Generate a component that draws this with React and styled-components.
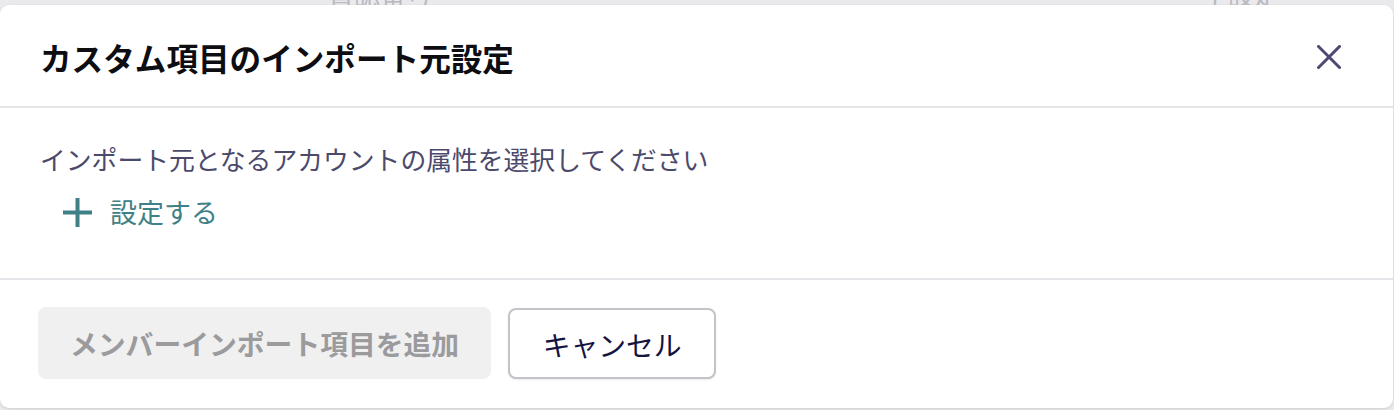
import React from "react";
import styled, { createGlobalStyle } from "styled-components";

const GlobalStyle = createGlobalStyle`
  html, body {
    margin: 0;
    padding: 0;
    background: #eaeaed;
    font-family: "Noto Sans CJK JP", "Noto Sans", sans-serif;
  }
  * { box-sizing: border-box; }
`;

const Page = styled.div`
  width: 1394px;
  height: 410px;
  overflow: hidden;
  display: flex;
  flex-direction: column;
`;

const BackdropStrip = styled.div`
  height: 5px;
  overflow: hidden;
  display: flex;
  align-items: flex-end;
  padding-left: 328px;
  gap: 770px;
`;

const BackdropText = styled.span`
  font-size: 26px;
  line-height: 26px;
  color: #b9b9c2;
  white-space: nowrap;
  transform: translateY(2px);
`;

const Modal = styled.div`
  width: 1393px;
  height: 403px;
  background: #ffffff;
  border-radius: 9px;
  display: flex;
  flex-direction: column;
  box-shadow: 0 1px 3px rgba(0, 0, 0, 0.12);
`;

const Header = styled.div`
  height: 103px;
  padding: 3px 52px 0 40px;
  display: flex;
  align-items: center;
  justify-content: space-between;
  border-bottom: 2px solid #e3e5e8;
`;

const Title = styled.h2`
  margin: 0;
  font-size: 31.6px;
  font-weight: 700;
  color: #0d0d12;
  letter-spacing: 0;
`;

const CloseButton = styled.button`
  border: none;
  background: none;
  padding: 0;
  width: 24px;
  height: 24px;
  display: flex;
  align-items: center;
  justify-content: center;
  cursor: pointer;
`;

const Body = styled.div`
  height: 172px;
  padding: 33px 40px 0 40px;
  display: flex;
  flex-direction: column;
  border-bottom: 2px solid #e3e5e8;
`;

const Description = styled.p`
  margin: 0;
  font-size: 25.8px;
  line-height: 36px;
  color: #4b4a6b;
`;

const AddLink = styled.button`
  margin-top: 17px;
  margin-left: 23px;
  align-self: flex-start;
  border: none;
  background: none;
  padding: 0;
  display: flex;
  align-items: center;
  gap: 18px;
  font-family: inherit;
  font-size: 27px;
  line-height: 36px;
  color: #3f8187;
  cursor: pointer;
`;

const Footer = styled.div`
  flex: 1;
  padding: 27px 38px 0 38px;
  display: flex;
  align-items: flex-start;
  gap: 17px;
`;

const Button = styled.button`
  height: ${(p) => (p.$variant === "secondary" ? "71px" : "72px")};
  padding: 0 ${(p) => (p.$variant === "secondary" ? "32.5px" : "32px")};
  border-radius: 8px;
  font-family: inherit;
  font-size: 27.8px;
  font-weight: ${(p) => (p.$variant === "secondary" ? 400 : 700)};
  color: ${(p) => (p.$variant === "secondary" ? "#15133f" : "#9b9b9e")};
  background: ${(p) => (p.$variant === "secondary" ? "#ffffff" : "#f0f0f0")};
  border: ${(p) =>
    p.$variant === "secondary" ? "2px solid #c2c4ca" : "none"};
  box-shadow: ${(p) =>
    p.$variant === "secondary" ? "0 1px 2px rgba(0,0,0,0.08)" : "none"};
  margin-top: ${(p) => (p.$variant === "secondary" ? "1px" : "0")};
  cursor: ${(p) => (p.$variant === "secondary" ? "pointer" : "default")};
  white-space: nowrap;
`;

export default function App() {
  return (
    <>
      <GlobalStyle />
      <Page>
        <BackdropStrip>
          <BackdropText>書誌番号</BackdropText>
          <BackdropText>主設定</BackdropText>
        </BackdropStrip>
        <Modal>
          <Header>
            <Title>カスタム項目のインポート元設定</Title>
            <CloseButton aria-label="閉じる">
              <svg width="24" height="24" viewBox="0 0 24 24">
                <path
                  d="M1.5 1.5 L22.5 22.5 M22.5 1.5 L1.5 22.5"
                  stroke="#4d4a72"
                  strokeWidth="3"
                  strokeLinecap="square"
                  fill="none"
                />
              </svg>
            </CloseButton>
          </Header>
          <Body>
            <Description>
              インポート元となるアカウントの属性を選択してください
            </Description>
            <AddLink>
              <svg width="29" height="29" viewBox="0 0 29 29">
                <path
                  d="M14.5 0 V29 M0 14.5 H29"
                  stroke="#3f8187"
                  strokeWidth="4"
                  fill="none"
                />
              </svg>
              設定する
            </AddLink>
          </Body>
          <Footer>
            <Button disabled>メンバーインポート項目を追加</Button>
            <Button $variant="secondary">キャンセル</Button>
          </Footer>
        </Modal>
      </Page>
    </>
  );
}
